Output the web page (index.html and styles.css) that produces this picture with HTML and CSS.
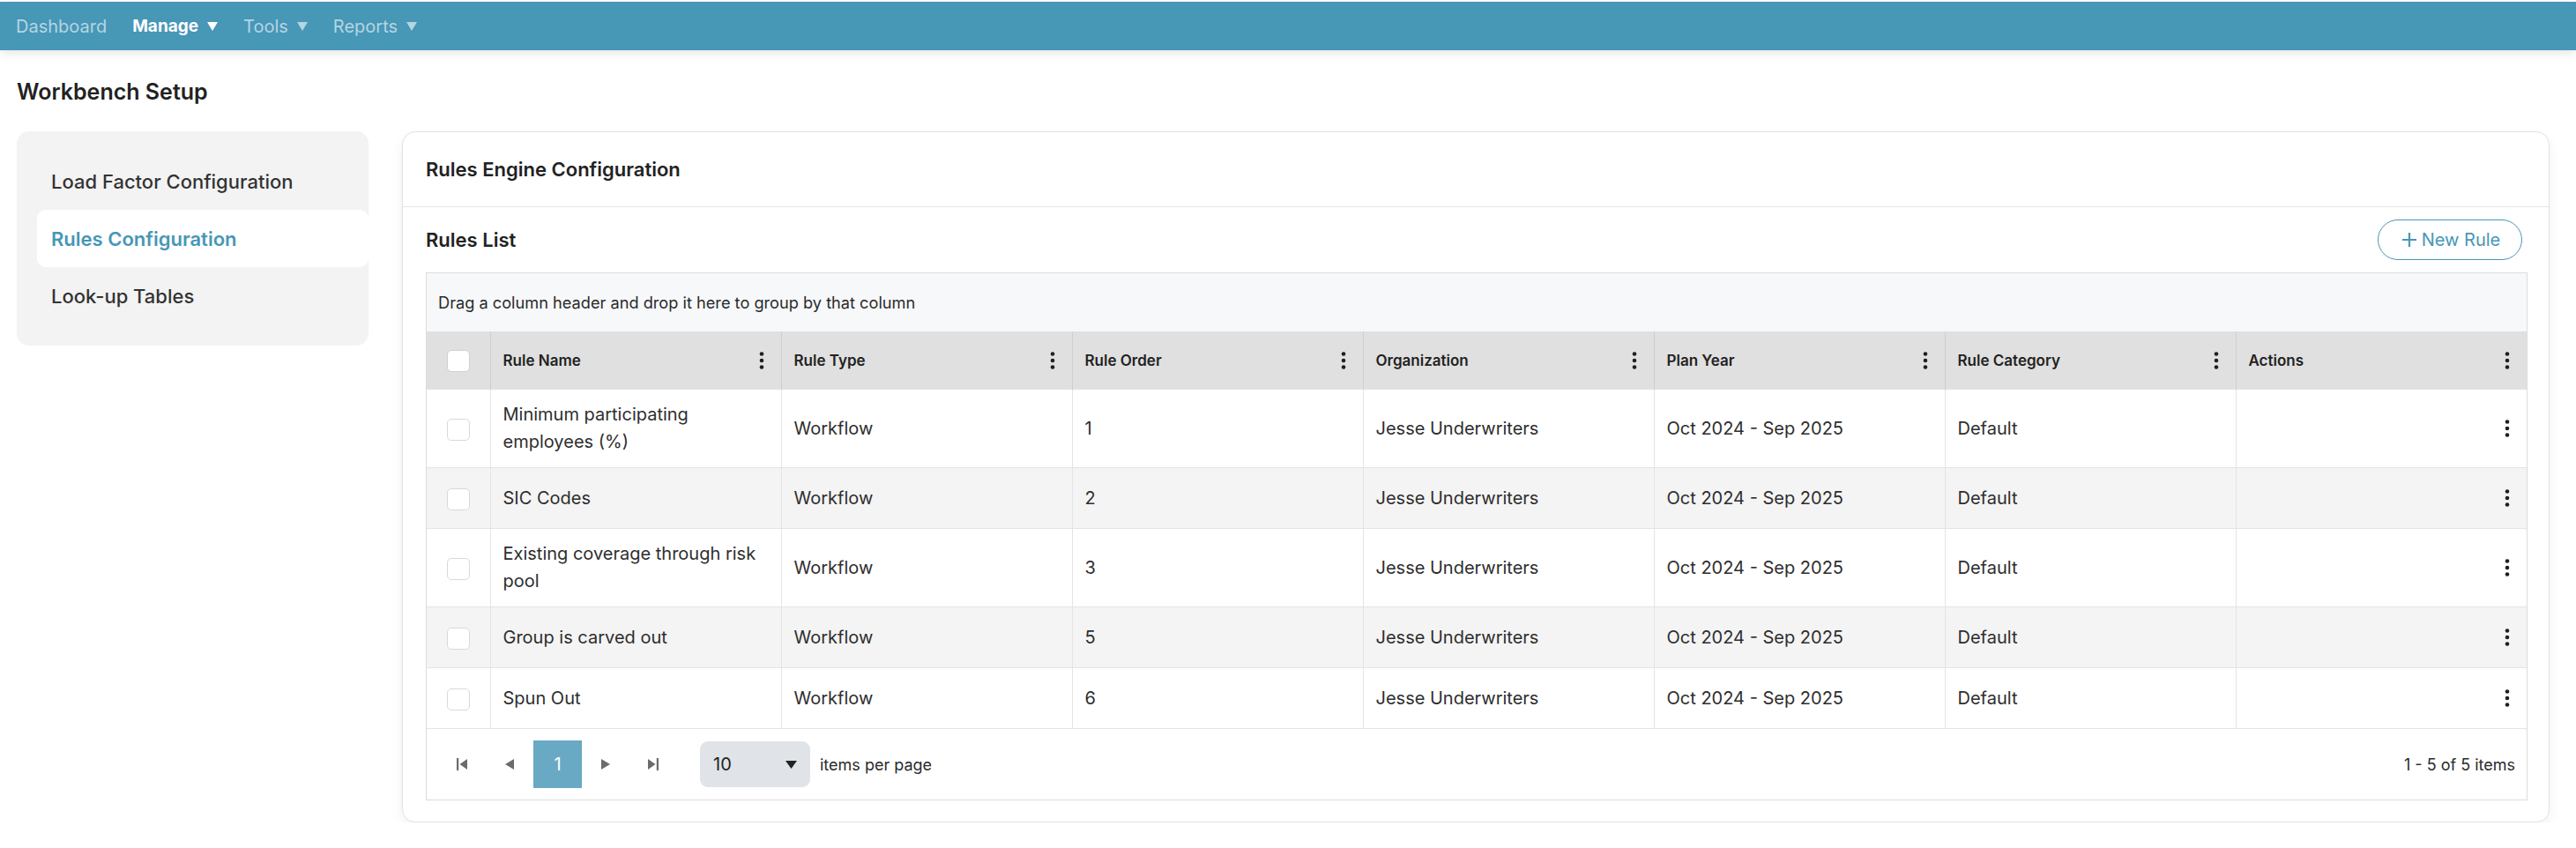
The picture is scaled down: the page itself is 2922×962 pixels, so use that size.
FILE: index.html
```html
<!DOCTYPE html>
<html lang="en">
<head>
<meta charset="utf-8">
<title>Workbench Setup</title>
<link rel="stylesheet" href="styles.css">
</head>
<body>
<header class="topnav">
  <nav class="nav">
    <a class="nav-item">Dashboard</a>
    <a class="nav-item active">Manage <svg class="caret" viewBox="0 0 12 10"><polygon points="0,0 12,0 6,10"/></svg></a>
    <a class="nav-item">Tools <svg class="caret" viewBox="0 0 12 10"><polygon points="0,0 12,0 6,10"/></svg></a>
    <a class="nav-item">Reports <svg class="caret" viewBox="0 0 12 10"><polygon points="0,0 12,0 6,10"/></svg></a>
  </nav>
</header>

<main class="page">
  <h1 class="page-title">Workbench Setup</h1>
  <div class="layout">
    <aside class="side">
      <div class="side-item">Load Factor Configuration</div>
      <div class="side-item active">Rules Configuration</div>
      <div class="side-item">Look-up Tables</div>
    </aside>

    <section class="card">
      <div class="card-head">Rules Engine Configuration</div>
      <div class="card-body">
        <div class="toolbar">
          <h2 class="list-title">Rules List</h2>
          <button class="btn-new"><svg class="plus" viewBox="0 0 18 18"><path d="M9 1v16M1 9h16"/></svg>New Rule</button>
        </div>

        <div class="grid">
          <div class="group-panel">Drag a column header and drop it here to group by that column</div>
          <table class="rules">
            <colgroup>
              <col class="c-check">
              <col><col><col><col><col><col><col>
            </colgroup>
            <thead>
              <tr>
                <th class="check-cell"><span class="checkbox head-box"></span></th>
                <th><div class="th-in"><span>Rule Name</span><svg class="kebab" viewBox="0 0 6 20"><circle cx="3" cy="2.5" r="2.3"/><circle cx="3" cy="10" r="2.3"/><circle cx="3" cy="17.5" r="2.3"/></svg></div></th>
                <th><div class="th-in"><span>Rule Type</span><svg class="kebab" viewBox="0 0 6 20"><circle cx="3" cy="2.5" r="2.3"/><circle cx="3" cy="10" r="2.3"/><circle cx="3" cy="17.5" r="2.3"/></svg></div></th>
                <th><div class="th-in"><span>Rule Order</span><svg class="kebab" viewBox="0 0 6 20"><circle cx="3" cy="2.5" r="2.3"/><circle cx="3" cy="10" r="2.3"/><circle cx="3" cy="17.5" r="2.3"/></svg></div></th>
                <th><div class="th-in"><span>Organization</span><svg class="kebab" viewBox="0 0 6 20"><circle cx="3" cy="2.5" r="2.3"/><circle cx="3" cy="10" r="2.3"/><circle cx="3" cy="17.5" r="2.3"/></svg></div></th>
                <th><div class="th-in"><span>Plan Year</span><svg class="kebab" viewBox="0 0 6 20"><circle cx="3" cy="2.5" r="2.3"/><circle cx="3" cy="10" r="2.3"/><circle cx="3" cy="17.5" r="2.3"/></svg></div></th>
                <th><div class="th-in"><span>Rule Category</span><svg class="kebab" viewBox="0 0 6 20"><circle cx="3" cy="2.5" r="2.3"/><circle cx="3" cy="10" r="2.3"/><circle cx="3" cy="17.5" r="2.3"/></svg></div></th>
                <th><div class="th-in"><span>Actions</span><svg class="kebab" viewBox="0 0 6 20"><circle cx="3" cy="2.5" r="2.3"/><circle cx="3" cy="10" r="2.3"/><circle cx="3" cy="17.5" r="2.3"/></svg></div></th>
              </tr>
            </thead>
            <tbody>
              <tr>
                <td class="check-cell"><span class="checkbox"></span></td>
                <td>Minimum participating employees (%)</td>
                <td>Workflow</td>
                <td>1</td>
                <td>Jesse Underwriters</td>
                <td>Oct 2024 - Sep 2025</td>
                <td>Default</td>
                <td class="act"><svg class="kebab" viewBox="0 0 6 20"><circle cx="3" cy="2.5" r="2.3"/><circle cx="3" cy="10" r="2.3"/><circle cx="3" cy="17.5" r="2.3"/></svg></td>
              </tr>
              <tr class="alt">
                <td class="check-cell"><span class="checkbox"></span></td>
                <td>SIC Codes</td>
                <td>Workflow</td>
                <td>2</td>
                <td>Jesse Underwriters</td>
                <td>Oct 2024 - Sep 2025</td>
                <td>Default</td>
                <td class="act"><svg class="kebab" viewBox="0 0 6 20"><circle cx="3" cy="2.5" r="2.3"/><circle cx="3" cy="10" r="2.3"/><circle cx="3" cy="17.5" r="2.3"/></svg></td>
              </tr>
              <tr>
                <td class="check-cell"><span class="checkbox"></span></td>
                <td>Existing coverage through risk pool</td>
                <td>Workflow</td>
                <td>3</td>
                <td>Jesse Underwriters</td>
                <td>Oct 2024 - Sep 2025</td>
                <td>Default</td>
                <td class="act"><svg class="kebab" viewBox="0 0 6 20"><circle cx="3" cy="2.5" r="2.3"/><circle cx="3" cy="10" r="2.3"/><circle cx="3" cy="17.5" r="2.3"/></svg></td>
              </tr>
              <tr class="alt">
                <td class="check-cell"><span class="checkbox"></span></td>
                <td>Group is carved out</td>
                <td>Workflow</td>
                <td>5</td>
                <td>Jesse Underwriters</td>
                <td>Oct 2024 - Sep 2025</td>
                <td>Default</td>
                <td class="act"><svg class="kebab" viewBox="0 0 6 20"><circle cx="3" cy="2.5" r="2.3"/><circle cx="3" cy="10" r="2.3"/><circle cx="3" cy="17.5" r="2.3"/></svg></td>
              </tr>
              <tr>
                <td class="check-cell"><span class="checkbox"></span></td>
                <td>Spun Out</td>
                <td>Workflow</td>
                <td>6</td>
                <td>Jesse Underwriters</td>
                <td>Oct 2024 - Sep 2025</td>
                <td>Default</td>
                <td class="act"><svg class="kebab" viewBox="0 0 6 20"><circle cx="3" cy="2.5" r="2.3"/><circle cx="3" cy="10" r="2.3"/><circle cx="3" cy="17.5" r="2.3"/></svg></td>
              </tr>
            </tbody>
          </table>

          <div class="pager">
            <div class="pager-left">
              <span class="pg-btn"><svg viewBox="0 0 12 14"><rect x="0" y="0" width="2.2" height="14"/><polygon points="12,1 3.5,7 12,13"/></svg></span>
              <span class="pg-btn"><svg class="tri" viewBox="0 0 10 12"><polygon points="10,0 0,6 10,12"/></svg></span>
              <span class="pg-num">1</span>
              <span class="pg-btn"><svg class="tri" viewBox="0 0 10 12"><polygon points="0,0 10,6 0,12"/></svg></span>
              <span class="pg-btn"><svg viewBox="0 0 12 14"><polygon points="0,1 8.5,7 0,13"/><rect x="9.8" y="0" width="2.2" height="14"/></svg></span>
              <span class="pg-size">10<svg class="dd" viewBox="0 0 13 9"><polygon points="0,0 13,0 6.5,9"/></svg></span>
              <span class="pg-label">items per page</span>
            </div>
            <div class="pg-info">1 - 5 of 5 items</div>
          </div>
        </div>
      </div>
    </section>
  </div>
</main>
</body>
</html>
```
FILE: styles.css
```css
* { box-sizing: border-box; }

html, body {
  margin: 0;
  padding: 0;
  background: #ffffff;
  font-family: Inter, "Noto Sans", "Liberation Sans", sans-serif;
  color: #333333;
}

/* ---------- top navigation ---------- */
.topnav {
  margin-top: 2px;
  height: 55px;
  background: #4797b7;
  box-shadow: 0 4px 10px rgba(0, 0, 0, 0.09);
  position: relative;
  z-index: 1;
}
.nav {
  height: 100%;
  display: flex;
  align-items: center;
  gap: 29px;
  padding-left: 18px;
}
.nav-item {
  display: flex;
  align-items: center;
  gap: 10px;
  font-size: 20px;
  color: #b4d5e2;
  text-decoration: none;
}
.nav-item.active {
  color: #ffffff;
  font-weight: 700;
  font-size: 19px;
}
.caret {
  width: 12px;
  height: 10px;
  fill: currentColor;
}

/* ---------- page ---------- */
.page {
  padding: 0 30px 0 19px;
}
.page-title {
  margin: 33px 0 31px;
  font-size: 25px;
  line-height: 28px;
  font-weight: 600;
  color: #222222;
}
.layout {
  display: flex;
  align-items: flex-start;
  gap: 38px;
}

/* ---------- side menu ---------- */
.side {
  width: 399px;
  flex: none;
  background: #f3f3f3;
  border-radius: 14px;
  padding: 24px 0 24px 23px;
}
.side-item {
  height: 65px;
  display: flex;
  align-items: center;
  padding-left: 16px;
  font-size: 22px;
  font-weight: 500;
  color: #333333;
  border-radius: 10px;
}
.side-item.active {
  background: #ffffff;
  color: #4797b7;
  font-weight: 600;
}

/* ---------- card ---------- */
.card {
  flex: 1;
  background: #ffffff;
  border: 1px solid #e2e2e2;
  border-radius: 15px;
  box-shadow: 0 6px 14px rgba(0, 0, 0, 0.06);
}
.card-head {
  height: 85px;
  display: flex;
  align-items: center;
  padding: 0 26px;
  border-bottom: 1px solid #e6e6e6;
  font-size: 22px;
  font-weight: 600;
  color: #222222;
}
.card-body {
  padding: 0 24px 24px 26px;
}
.toolbar {
  height: 74px;
  display: flex;
  align-items: center;
  justify-content: space-between;
}
.list-title {
  margin: 0;
  font-size: 22px;
  font-weight: 600;
  color: #222222;
}
.btn-new {
  height: 46px;
  width: 164px;
  margin-right: 6px;
  display: flex;
  align-items: center;
  justify-content: center;
  gap: 5px;
  border: 1.5px solid #4797b7;
  border-radius: 23px;
  background: #ffffff;
  color: #4797b7;
  font-family: inherit;
  font-size: 20px;
  padding: 0 0 0 2px;
}
.plus {
  width: 18px;
  height: 18px;
  stroke: #4797b7;
  stroke-width: 2.2;
  fill: none;
}

/* ---------- grid ---------- */
.grid {
  border: 1px solid #dcdcdc;
}
.group-panel {
  height: 66px;
  display: flex;
  align-items: center;
  padding-left: 13px;
  background: #f7f8fa;
  font-size: 18.2px;
  color: #2b2b2b;
}
.rules {
  width: 100%;
  border-collapse: collapse;
  table-layout: fixed;
}
.c-check { width: 72px; }

.rules th {
  height: 66px;
  background: #e0e0e0;
  padding: 0 19px 0 14px;
  text-align: left;
  font-size: 17px;
  font-weight: 600;
  color: #222222;
  border-left: 1px solid #cfcfcf;
}
.rules th:first-child { border-left: none; }
.th-in {
  display: flex;
  align-items: center;
  justify-content: space-between;
}
.kebab {
  width: 6px;
  height: 20px;
  fill: #1f1f1f;
  display: block;
}

.rules td {
  height: 69px;
  padding: 13px 14px;
  font-size: 20px;
  line-height: 31px;
  color: #2e2e2e;
  border-left: 1px solid #e4e4e4;
  border-bottom: 1px solid #e4e4e4;
  vertical-align: middle;
}
.rules td:first-child { border-left: none; }
.rules tr.alt td { background: #f4f4f4; }
.rules td.act .kebab { margin-left: auto; margin-right: 5px; }

.rules th.check-cell,
.rules td.check-cell {
  padding: 0;
  text-align: center;
}
.checkbox {
  display: inline-block;
  width: 26px;
  height: 25px;
  vertical-align: middle;
  background: #ffffff;
  border: 1px solid #d9d9d9;
  border-radius: 5px;
}
.head-box { border-color: #d0d0d0; }

/* ---------- pager ---------- */
.pager {
  height: 80px;
  display: flex;
  align-items: center;
  justify-content: space-between;
  padding: 0 13px;
}
.pager-left {
  display: flex;
  align-items: center;
}
.pg-btn {
  width: 54px;
  height: 54px;
  display: flex;
  align-items: center;
  justify-content: center;
}
.pg-btn svg {
  width: 12px;
  height: 14px;
  fill: #6b6b6b;
}
.pg-btn svg.tri {
  width: 10px;
  height: 12px;
}
.pg-num {
  width: 55px;
  height: 54px;
  display: flex;
  align-items: center;
  justify-content: center;
  background: #69a9c4;
  color: #ffffff;
  font-size: 20px;
}
.pg-size {
  margin-left: 26px;
  width: 125px;
  height: 52px;
  display: flex;
  align-items: center;
  justify-content: space-between;
  padding: 0 15px;
  background: #e0e3e8;
  border-radius: 9px;
  font-size: 20px;
  color: #222222;
}
.dd {
  width: 13px;
  height: 9px;
  fill: #222222;
}
.pg-label {
  margin-left: 11px;
  font-size: 18px;
  color: #2b2b2b;
}
.pg-info {
  font-size: 18px;
  color: #2b2b2b;
}
```
